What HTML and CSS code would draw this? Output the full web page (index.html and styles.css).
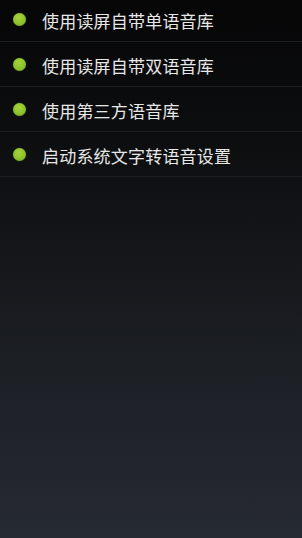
FILE: index.html
```html
<!DOCTYPE html>
<html>
<head>
    <meta charset="utf-8">
    <link rel="stylesheet" href="styles.css">
</head>
<body>
    <div class="screen">
        <ul class="menu">
            <li class="menu-item"><span class="dot"></span><span class="label">使用读屏自带单语音库</span></li>
            <li class="menu-item"><span class="dot"></span><span class="label">使用读屏自带双语音库</span></li>
            <li class="menu-item"><span class="dot"></span><span class="label">使用第三方语音库</span></li>
            <li class="menu-item"><span class="dot"></span><span class="label">启动系统文字转语音设置</span></li>
        </ul>
    </div>
</body>
</html>
```

FILE: styles.css
```css
html, body {
    margin: 0;
    height: 100%;
}

body {
    font-family: "Noto Sans CJK SC", "Liberation Sans", sans-serif;
    background: linear-gradient(to bottom, #060607 0%, #0e0f11 30%, #1b1e23 65%, #262a31 100%);
    overflow: hidden;
}

.screen {
    height: 100%;
}

.menu {
    list-style: none;
    margin: -3px 0 0 0;
    padding: 0;
}

.menu-item {
    display: flex;
    align-items: center;
    height: 44px;
    border-bottom: 1px solid #1d1e20;
}

.dot {
    width: 13px;
    height: 13px;
    border-radius: 50%;
    margin-left: 13px;
    margin-right: 16px;
    background: radial-gradient(circle at 45% 35%, #a6d23c 0%, #8cc22c 55%, #6f9c1e 100%);
    box-shadow: 0 0 1px rgba(150, 200, 60, 0.5);
    flex-shrink: 0;
}

.label {
    color: #e8e8e8;
    font-size: 17px;
    letter-spacing: 0.2px;
    padding-top: 2px;
}
```
